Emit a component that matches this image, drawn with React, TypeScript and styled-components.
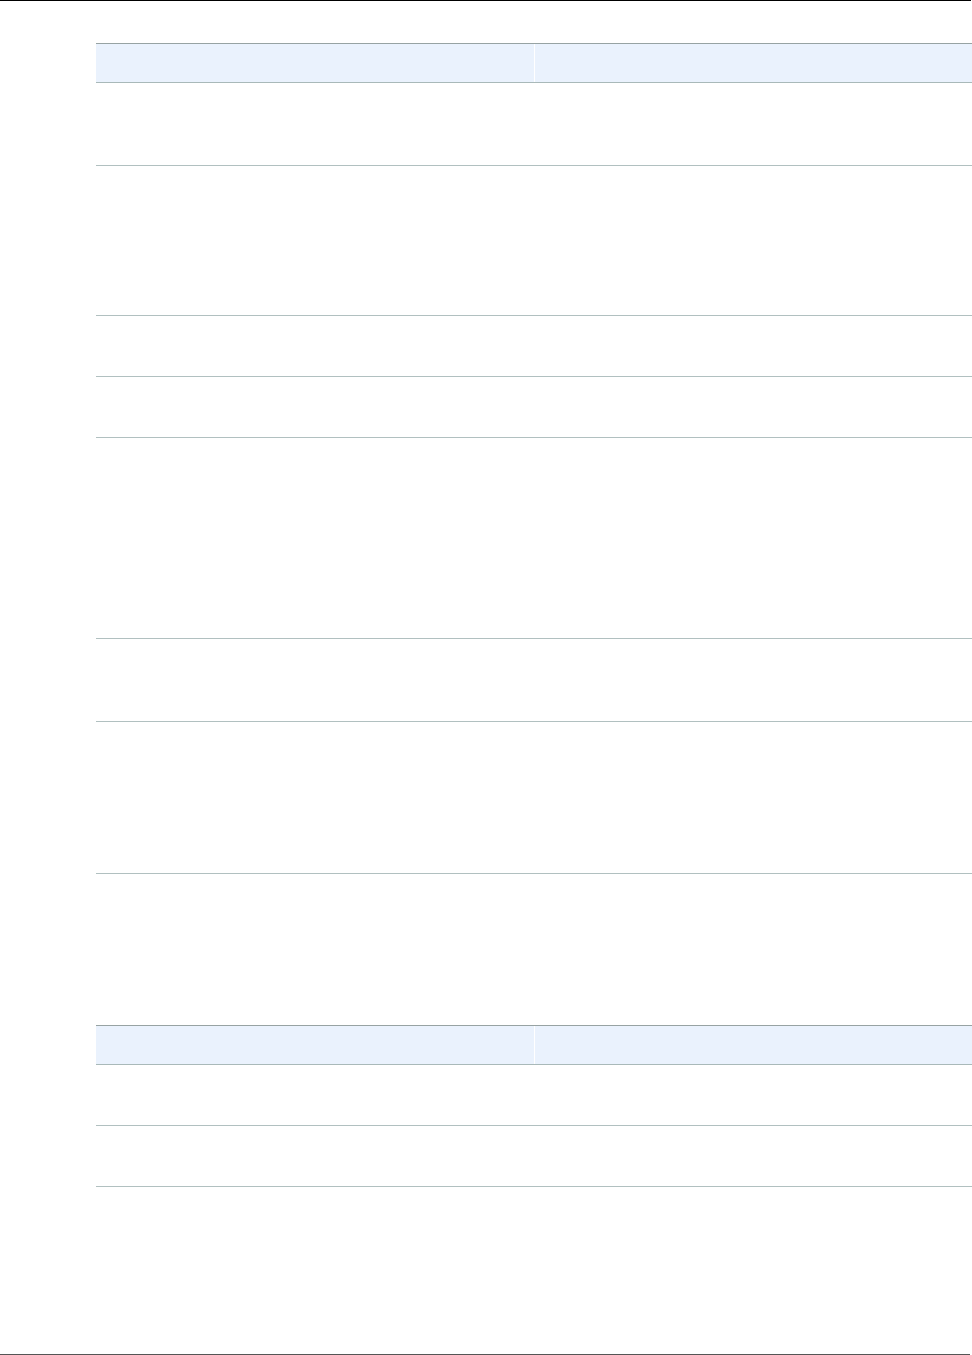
import React from "react";
import styled, { createGlobalStyle } from "styled-components";

const Global = createGlobalStyle`
  html, body { margin: 0; padding: 0; background: #ffffff; }
  body { font-family: "Liberation Sans", Arial, sans-serif; font-size: 14px; color: #333; }
`;

const Page = styled.div`
  min-height: 1355px;
  width: 972px;
  display: flex;
  flex-direction: column;
  overflow: hidden;
`;

const TopRule = styled.div`
  height: 1px;
  background: #000000;
  width: 971px;
`;

const BottomRule = styled.div`
  margin-top: auto;
  height: 1px;
  background: #555555;
  width: 970px;
`;

const Table = styled.div<{ $top: number }>`
  margin-top: ${(p) => p.$top}px;
  margin-left: 96px;
  width: 876px;
  display: flex;
  flex-direction: column;
`;

const HeadRow = styled.div`
  display: grid;
  grid-template-columns: 438px 1px 1fr;
  height: 38px;
  border-top: 1px solid #97a3a3;
  border-bottom: 1px solid #a9b9b9;
`;

const HeadCell = styled.div`
  background: #eaf2fd;
`;

const Divider = styled.div`
  background: #ffffff;
`;

const BodyRow = styled.div<{ $h: number; $last?: boolean }>`
  display: grid;
  grid-template-columns: 438px 1fr;
  height: ${(p) => p.$h}px;
  border-bottom: ${(p) => (p.$last ? "none" : "1px solid #b1c0c0")};
`;

const Cell = styled.div``;

const table1 = [82, 149, 60, 60, 200, 82, 151];
const table2 = [60, 60];

function DataTable({ top, rows, tail }: { top: number; rows: number[]; tail?: boolean }) {
  return (
    <Table $top={top}>
      <HeadRow>
        <HeadCell />
        <Divider />
        <HeadCell />
      </HeadRow>
      {rows.map((h, i) => (
        <BodyRow key={i} $h={h}>
          <Cell />
          <Cell />
        </BodyRow>
      ))}
      {tail && (
        <BodyRow $h={120} $last>
          <Cell />
          <Cell />
        </BodyRow>
      )}
    </Table>
  );
}

export default function App() {
  return (
    <>
      <Global />
      <Page>
        <TopRule />
        <DataTable top={42} rows={table1} />
        <DataTable top={151} rows={table2} tail />
        <BottomRule />
      </Page>
    </>
  );
}
